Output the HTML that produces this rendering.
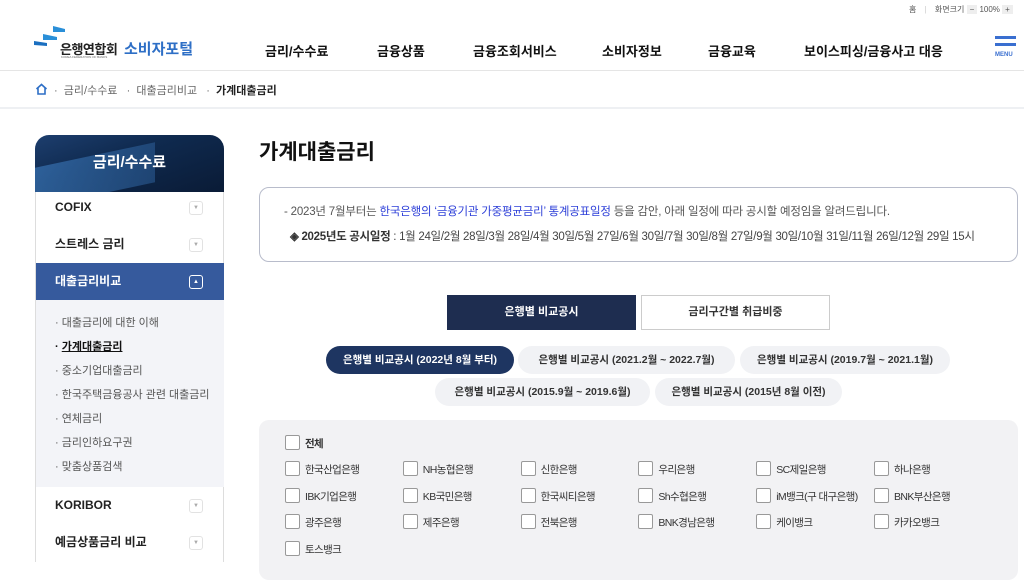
<!DOCTYPE html>
<html><head><meta charset="utf-8"><style>
*{margin:0;padding:0;box-sizing:border-box}
body{width:1024px;height:562px;overflow:hidden;background:#fff;font-family:"Liberation Sans","Noto Sans CJK KR",sans-serif;color:#222;position:relative}
.a{position:absolute;white-space:nowrap}
.nav{font-size:13px;font-weight:bold;top:41px;color:#111}
.side{position:absolute;left:35px;width:189px;border-right:1px solid #ddd;border-left:1px solid #ddd}
.it{position:absolute;left:0;width:188px;height:37px;font-size:12px;font-weight:bold;padding-left:19px;line-height:37px;color:#222}
.arr{position:absolute;right:21px;top:12px;width:14px;height:14px;border:1px solid #e2e2e2;border-radius:3px;font-size:6px;color:#aaa;text-align:center;line-height:12px}
.sub{font-size:11px;color:#555;left:55px}
.cb{position:absolute;width:15px;height:15px;border:1px solid #999;border-radius:2px;background:#fff}
.cl{position:absolute;font-size:10.5px;color:#333;letter-spacing:-0.6px}
.pill{position:absolute;height:28px;border-radius:14px;background:#f1f2f5;font-size:10.5px;font-weight:bold;color:#333;text-align:center;line-height:28px}
</style></head><body>
<div class="a" style="left:909px;top:4px;font-size:8px;color:#555">홈 <span style="color:#ccc;margin:0 6px">|</span> 화면크기 <span style="background:#eee;padding:0 3px">−</span> 100% <span style="background:#eee;padding:0 3px">+</span></div>
<svg class="a" style="left:33px;top:24px" width="40" height="28"><path d="M20 2 L32 5 L32 8 L20 8 Z" fill="#2a8fd8"/><path d="M10 10 L24 13 L24 16 L10 16Z" fill="#2a8fd8"/><path d="M1 17 L14 19 L14 22 L1 21Z" fill="#1b6fc0"/></svg>
<div class="a" style="left:60px;top:39px;font-size:13px;font-weight:bold;color:#222;letter-spacing:-0.5px">은행연합회</div>
<div class="a" style="left:61px;top:55px;font-size:3px;color:#666">KOREA FEDERATION OF BANKS</div>
<div class="a" style="left:124px;top:38px;font-size:15px;font-weight:bold;color:#2e6fc6">소비자포털</div>
<div class="a nav" style="left:265px">금리/수수료</div>
<div class="a nav" style="left:377px">금융상품</div>
<div class="a nav" style="left:473px">금융조회서비스</div>
<div class="a nav" style="left:602px">소비자정보</div>
<div class="a nav" style="left:708px">금융교육</div>
<div class="a nav" style="left:804px">보이스피싱/금융사고 대응</div>
<div class="a" style="left:995px;top:36px;width:21px;height:3px;background:#3a6fd0"></div>
<div class="a" style="left:995px;top:43px;width:21px;height:3px;background:#3a6fd0"></div>
<div class="a" style="left:995px;top:52px;font-size:6px;font-weight:bold;color:#3a6fd0">MENU</div>
<div class="a" style="left:0;top:70px;width:1024px;height:1px;background:#e5e5e5"></div>
<svg class="a" style="left:35px;top:83px" width="13" height="12"><path d="M1.5 6 L6.5 1.5 L11.5 6 M3 5 V11 H10 V5" fill="none" stroke="#2e6fc6" stroke-width="1.6"/></svg>
<div class="a" style="left:54px;top:82px;font-size:11px;color:#666">· &nbsp;금리/수수료 &nbsp;&nbsp;· &nbsp;대출금리비교 &nbsp;&nbsp;· &nbsp;<b style="color:#222">가계대출금리</b></div>
<div class="a" style="left:0;top:107px;width:1024px;height:2px;background:#eef0f3"></div>

<div class="a" style="left:35px;top:135px;width:189px;height:57px;border-radius:14px 14px 0 0;background:linear-gradient(160deg,#1d3e6e 0%,#0f2a4f 40%,#0a1b36 100%);overflow:hidden">
<div style="position:absolute;left:0;top:20px;width:120px;height:40px;background:linear-gradient(90deg,#3f7fc4,#2a5a92);transform:skewY(-12deg);opacity:.6"></div>
<div style="position:absolute;width:100%;top:16px;text-align:center;color:#fff;font-size:15px;font-weight:bold">금리/수수료</div></div>
<div class="side" style="top:192px;height:370px">
<div class="it" style="top:-3px">COFIX<span class="arr">▼</span></div>
<div class="it" style="top:34px">스트레스 금리<span class="arr">▼</span></div>
<div class="it" style="top:71px;background:#365a9d;color:#fff;height:37px">대출금리비교<span class="arr" style="border-color:#fff;color:#fff;background:transparent">▲</span></div>
<div style="position:absolute;top:108px;left:0;width:188px;height:187px;background:#f3f4f8"></div>
<div class="it" style="top:295px">KORIBOR<span class="arr">▼</span></div>
<div class="it" style="top:332px">예금상품금리 비교<span class="arr">▼</span></div>
</div>
<div class="a sub" style="top:314px">· 대출금리에 대한 이해</div>
<div class="a sub" style="top:338px;color:#111;font-weight:bold">· <u>가계대출금리</u></div>
<div class="a sub" style="top:362px">· 중소기업대출금리</div>
<div class="a sub" style="top:386px">· 한국주택금융공사 관련 대출금리</div>
<div class="a sub" style="top:410px">· 연체금리</div>
<div class="a sub" style="top:434px">· 금리인하요구권</div>
<div class="a sub" style="top:458px">· 맞춤상품검색</div>

<div class="a" style="left:259px;top:136px;font-size:21px;font-weight:bold;color:#111">가계대출금리</div>
<div class="a" style="left:259px;top:187px;width:759px;height:75px;border:1px solid #b8bccb;border-radius:10px"></div>
<div class="a" style="left:284px;top:203px;font-size:11.5px;color:#555;letter-spacing:-0.2px">- 2023년 7월부터는 <span style="color:#2d3fd8">한국은행의 ‘금융기관 가중평균금리’ 통계공표일정</span> 등을 감안, 아래 일정에 따라 공시할 예정임을 알려드립니다.</div>
<div class="a" style="left:290px;top:228px;font-size:11.5px;color:#444;letter-spacing:-0.3px"><b style="color:#333">◈ 2025년도 공시일정</b> : 1월 24일/2월 28일/3월 28일/4월 30일/5월 27일/6월 30일/7월 30일/8월 27일/9월 30일/10월 31일/11월 26일/12월 29일 15시</div>

<div class="a" style="left:447px;top:295px;width:189px;height:35px;background:#1e2d50;color:#fff;font-size:11px;font-weight:bold;text-align:center;line-height:35px">은행별 비교공시</div>
<div class="a" style="left:641px;top:295px;width:189px;height:35px;border:1px solid #ccc;color:#333;font-size:11px;font-weight:bold;text-align:center;line-height:33px">금리구간별 취급비중</div>
<div class="pill" style="left:326px;top:346px;width:188px;background:#1e3561;color:#fff">은행별 비교공시 (2022년 8월 부터)</div>
<div class="pill" style="left:518px;top:346px;width:217px">은행별 비교공시 (2021.2월 ~ 2022.7월)</div>
<div class="pill" style="left:740px;top:346px;width:210px">은행별 비교공시 (2019.7월 ~ 2021.1월)</div>
<div class="pill" style="left:435px;top:378px;width:215px">은행별 비교공시 (2015.9월 ~ 2019.6월)</div>
<div class="pill" style="left:655px;top:378px;width:187px">은행별 비교공시 (2015년 8월 이전)</div>

<div class="a" style="left:259px;top:420px;width:759px;height:160px;background:#f2f2f4;border-radius:10px"></div>
<div class="cb" style="left:285px;top:435px"></div><div class="cl" style="left:305px;top:436px;font-weight:bold">전체</div>
<div id="g"></div>
<script>
var n=[["한국산업은행","NH농협은행","신한은행","우리은행","SC제일은행","하나은행"],["IBK기업은행","KB국민은행","한국씨티은행","Sh수협은행","iM뱅크(구 대구은행)","BNK부산은행"],["광주은행","제주은행","전북은행","BNK경남은행","케이뱅크","카카오뱅크"],["토스뱅크"]],h="";
n.forEach(function(r,i){r.forEach(function(t,j){var x=285+j*117.8,y=461+i*26.5;h+='<div class="cb" style="left:'+x+'px;top:'+y+'px"></div><div class="cl" style="left:'+(x+20)+'px;top:'+(y+1)+'px">'+t+'</div>';});});
document.getElementById("g").outerHTML=h;
</script>
</body></html>
